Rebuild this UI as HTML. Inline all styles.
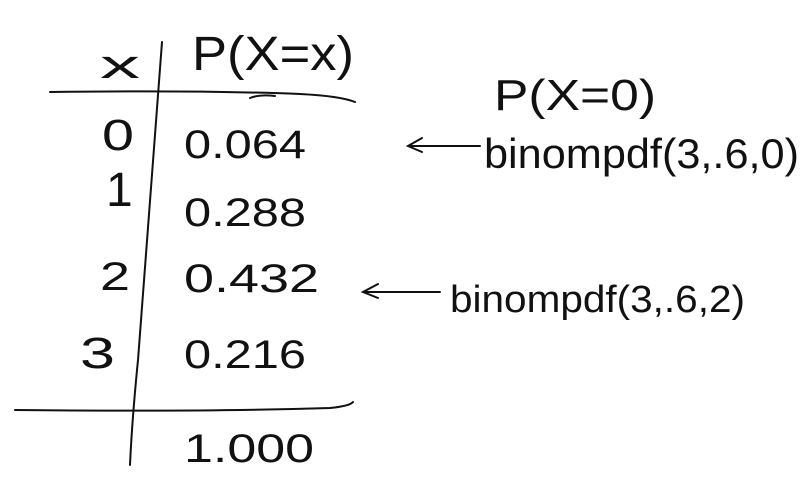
<!DOCTYPE html>
<html><head><meta charset="utf-8"><style>
html,body{margin:0;padding:0;background:#fff;}
svg{display:block}
text{font-family:"Liberation Sans",sans-serif;fill:#111;}
</style></head><body>
<svg width="808" height="480" viewBox="0 0 808 480" xmlns="http://www.w3.org/2000/svg">
<g stroke="#111" stroke-width="2" fill="none" stroke-linecap="round">
<path d="M162 42 Q150 200 138 360 Q132 420 130 465"/>
<path d="M50 92 Q200 90 300 94 Q340 96 355 102"/>
<path d="M250 98 Q260 94 275 96"/>
<path d="M15 410 Q200 412 330 408 Q350 406 353 402"/>
<path d="M480 146 L410 146 M422 138 L408 146 L422 152"/>
<path d="M440 292 L365 292 M378 284 L363 292 L378 298"/>
</g>
<text x="100" y="78" font-size="40" textLength="40" lengthAdjust="spacingAndGlyphs">x</text>
<text x="192" y="70" font-size="48" textLength="162" lengthAdjust="spacingAndGlyphs">P(X=x)</text>
<text x="102" y="150" font-size="44" textLength="32" lengthAdjust="spacingAndGlyphs">0</text>
<text x="184" y="158" font-size="40" textLength="122" lengthAdjust="spacingAndGlyphs">0.064</text>
<text x="106" y="206" font-size="48">1</text>
<text x="184" y="226" font-size="40" textLength="122" lengthAdjust="spacingAndGlyphs">0.288</text>
<text x="100" y="290" font-size="40" textLength="30" lengthAdjust="spacingAndGlyphs">2</text>
<text x="184" y="292" font-size="40" textLength="135" lengthAdjust="spacingAndGlyphs">0.432</text>
<text x="80" y="368" font-size="44" textLength="35" lengthAdjust="spacingAndGlyphs">3</text>
<text x="184" y="368" font-size="40" textLength="122" lengthAdjust="spacingAndGlyphs">0.216</text>
<text x="184" y="462" font-size="40" textLength="130" lengthAdjust="spacingAndGlyphs">1.000</text>
<text x="494" y="110" font-size="44" textLength="162" lengthAdjust="spacingAndGlyphs">P(X=0)</text>
<text x="484" y="168" font-size="42" textLength="315" lengthAdjust="spacingAndGlyphs">binompdf(3,.6,0)</text>
<text x="450" y="312" font-size="38" textLength="295" lengthAdjust="spacingAndGlyphs">binompdf(3,.6,2)</text>
</svg>
</body></html>
